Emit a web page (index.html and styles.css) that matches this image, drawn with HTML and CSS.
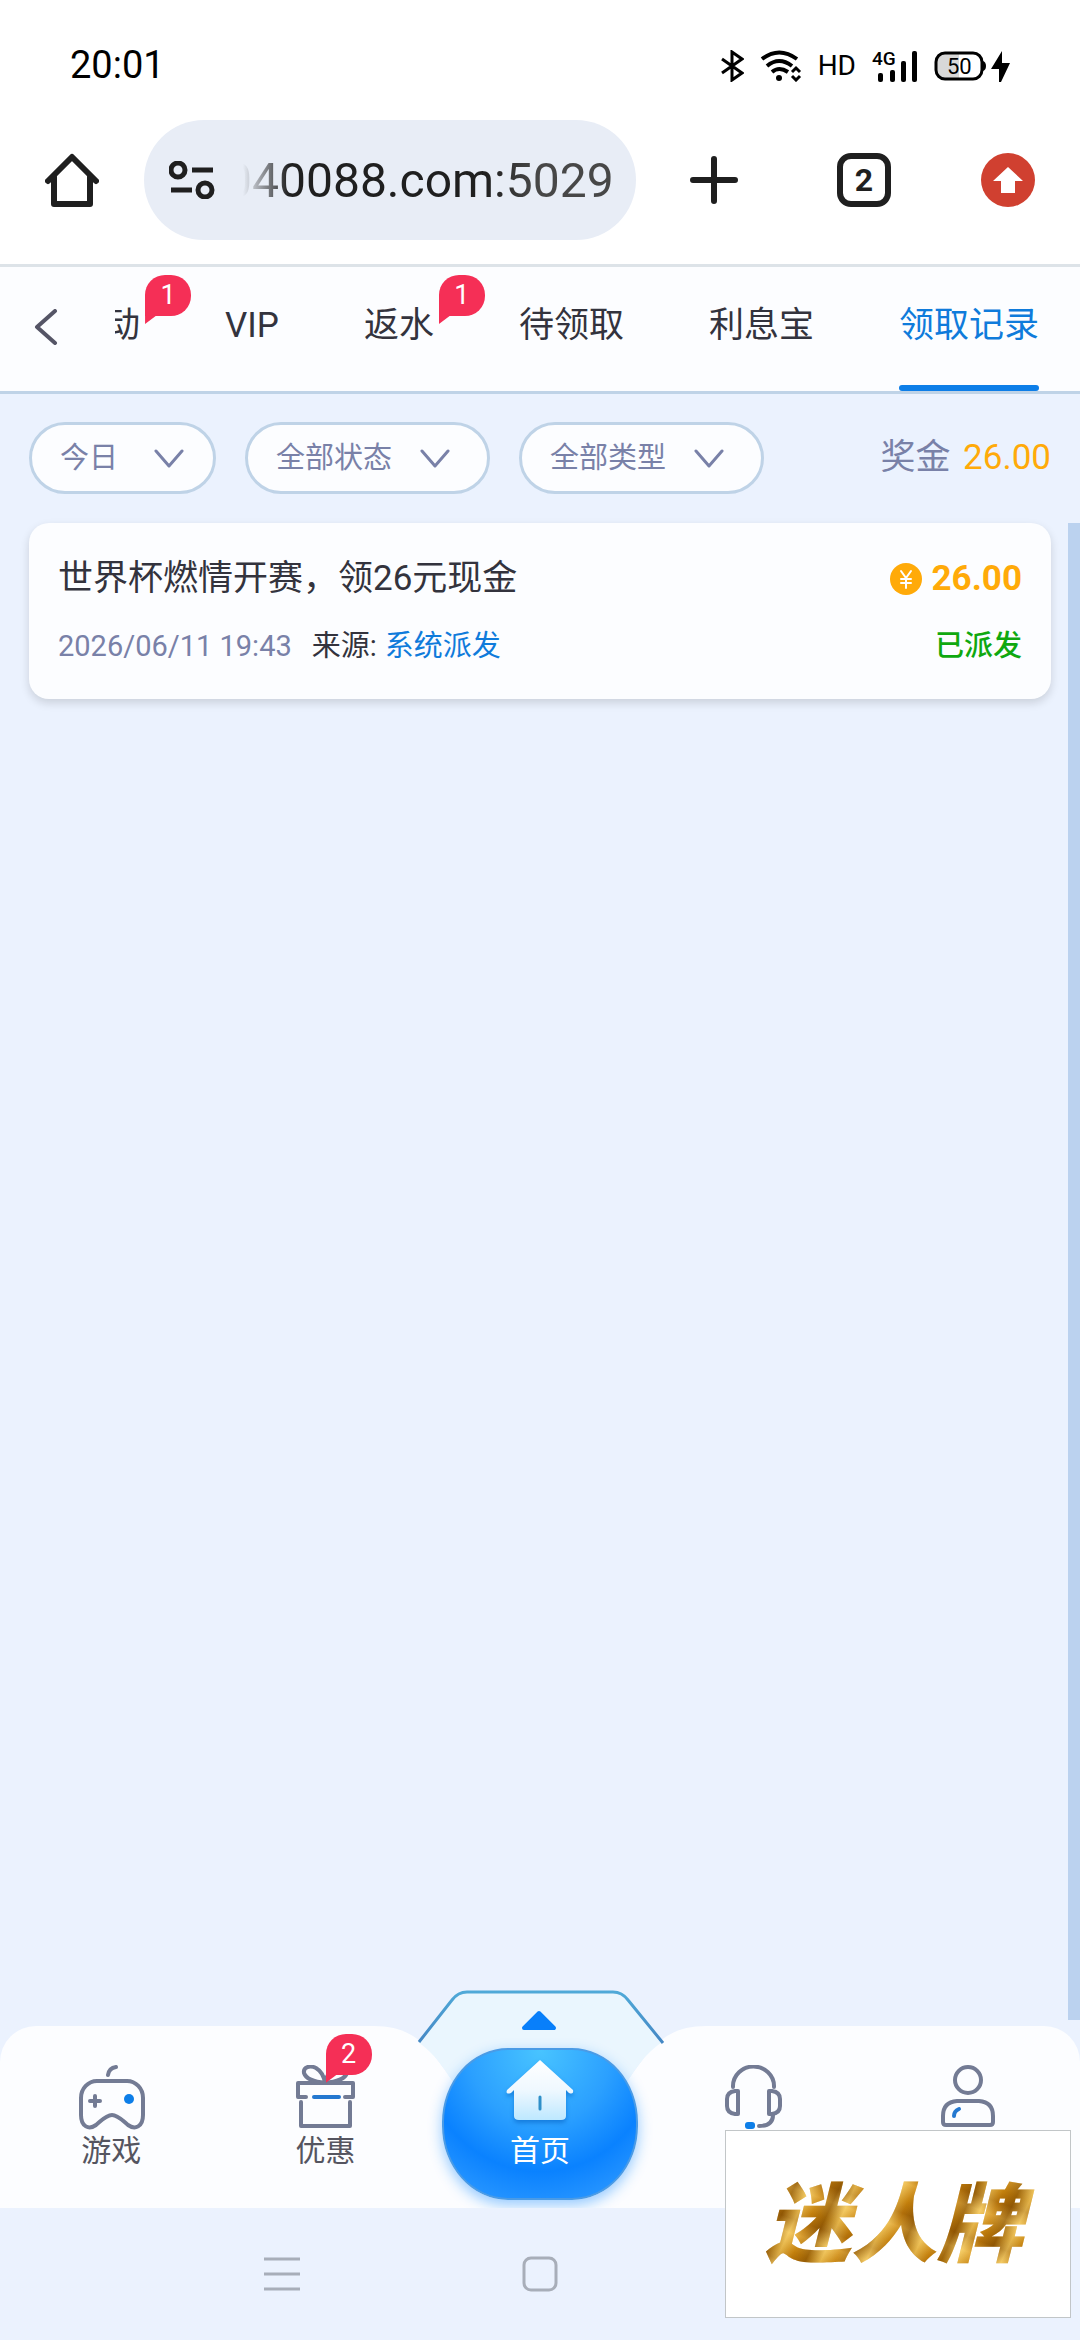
FILE: index.html
```html
<!DOCTYPE html>
<html lang="zh">
  <head>
    <meta charset="UTF-8" />
    <meta name="viewport" content="width=device-width, initial-scale=1.0" />
    <title>领取记录</title>
    <link rel="stylesheet" href="styles.css">
  </head>

  <body>
    <!-- 状态栏 -->
    <div class="status-bar">
      <span class="time">20:01</span>
      <div class="status-icons">
        <svg width="24" height="32" viewBox="0 0 24 32" fill="none" stroke="#000" stroke-width="3">
          <path d="M2 9 L22 23 L12 30 V2 L22 9 L2 23" />
        </svg>
        <svg class="wifi" width="42" height="32" viewBox="0 0 42 32" fill="none" stroke="#000" stroke-width="4">
          <path d="M2 9 Q19 -4 37 9" />
          <path d="M7 16 Q19 6 32 16" />
          <path d="M12 22 Q19 16 28 22" />
          <circle cx="19" cy="28" r="3" fill="#000" stroke="none" />
          <path d="M32 22 L36 18 L40 22 M32 26 L36 30 L40 26" stroke-width="3" />
        </svg>
        <span class="hd">HD</span>
        <svg class="signal" width="46" height="44" viewBox="0 -6 46 44">
          <text x="0" y="15" font-size="19" font-weight="500">4G</text>
          <rect x="6" y="23" width="5" height="9" rx="2" />
          <rect x="18" y="20" width="5" height="12" rx="2" />
          <rect x="29" y="11" width="5" height="21" rx="2" />
          <rect x="40" y="1" width="5" height="31" rx="2" />
        </svg>
        <svg class="battery" width="76" height="32" viewBox="0 0 76 32">
          <path d="M10 3 H25 V29 H10 Q3 29 3 20 V11 Q3 3 10 3Z" fill="#d8d8d8" />
          <rect x="2" y="3" width="46" height="26" rx="9" fill="none" stroke="#000" stroke-width="3" />
          <path d="M49 11 Q52 12 52 16 T49 21Z" />
          <text x="13" y="24" font-size="22">50</text>
          <path d="M68 1 L57 19 H65 V32 H67 L76 13 H68Z" />
        </svg>
      </div>
    </div>

    <!-- 浏览器地址栏 -->
    <header class="browser-bar">
      <button class="icon-btn" aria-label="主页">
        <svg width="54" height="54" viewBox="0 0 54 54" fill="none" stroke="#1f1f1f" stroke-width="6" stroke-linecap="round" stroke-linejoin="round">
          <path d="M3 28 L27 4 L51 28" />
          <path d="M9 24 V51 H45 V24" />
        </svg>
      </button>
      <div class="address">
        <svg width="46" height="38" viewBox="0 0 46 38" fill="none" stroke="#1f1f1f" stroke-width="5">
          <circle cx="9" cy="9" r="7" />
          <path d="M23 9 H44 M2 29 H23" />
          <circle cx="36" cy="29" r="7" />
        </svg>
        <input type="text" value="040088.com:5029" aria-label="网址" />
      </div>
      <button class="icon-btn add" aria-label="新标签页">
        <svg width="48" height="48" viewBox="0 0 48 48" stroke="#1f1f1f" stroke-width="6" stroke-linecap="round">
          <path d="M3 24 H45 M24 3 V45" />
        </svg>
      </button>
      <button class="icon-btn"><span class="tab-count">2</span></button>
      <button class="icon-btn" aria-label="更新">
        <svg width="54" height="54" viewBox="0 0 54 54">
          <circle cx="27" cy="27" r="27" fill="#d04030" />
          <path d="M27 14 L42 28 H34 V40 H20 V28 H12Z" fill="#fff" />
        </svg>
      </button>
    </header>

    <!-- 顶部导航 -->
    <div class="top-nav">
      <button class="back" aria-label="返回">
        <svg width="24" height="36" viewBox="0 0 24 36" fill="none" stroke="#555566" stroke-width="4" stroke-linecap="round" stroke-linejoin="round">
          <path d="M21 2 L3 18 L21 34" />
        </svg>
      </button>
      <nav class="tabs">
        <a href="#">动<span class="badge">1</span></a>
        <a href="#">VIP</a>
        <a href="#">返水<span class="badge">1</span></a>
        <a href="#">待领取</a>
        <a href="#">利息宝</a>
        <a href="#" class="active">领取记录</a>
      </nav>
    </div>

    <!-- 筛选 -->
    <div class="filters">
      <div class="filter filter-date">
        <select aria-label="日期"><option>今日</option></select>
        <svg width="30" height="20" viewBox="0 0 30 20"><path d="M2 2 L15 17 L28 2" /></svg>
      </div>
      <div class="filter">
        <select aria-label="状态"><option>全部状态</option></select>
        <svg width="30" height="20" viewBox="0 0 30 20"><path d="M2 2 L15 17 L28 2" /></svg>
      </div>
      <div class="filter">
        <select aria-label="类型"><option>全部类型</option></select>
        <svg width="30" height="20" viewBox="0 0 30 20"><path d="M2 2 L15 17 L28 2" /></svg>
      </div>
      <div class="bonus">奖金 <span>26.00</span></div>
    </div>

    <main>
      <div class="records">
        <article class="card">
          <div class="row title-row">
            <span>世界杯燃情开赛，领26元现金</span>
            <span class="amount">
              <svg width="32" height="32" viewBox="0 0 32 32">
                <circle cx="16" cy="16" r="16" fill="#ffaa09" />
                <path d="M11 8 L16 15 L21 8 M16 15 V25 M11 16 H21 M11 20 H21" fill="none" stroke="#fff" stroke-width="2" stroke-linecap="round" />
              </svg>
              26.00
            </span>
          </div>
          <div class="row info-row">
            <span class="date">2026/06/11 19:43</span>
            <span>来源:</span>
            <span class="source">系统派发</span>
            <span class="state">已派发</span>
          </div>
        </article>
      </div>
      <div class="scroll-thumb"></div>
    </main>

    <!-- 底部导航 -->
    <nav class="bottom-nav">
      <svg class="tray" width="360" height="228" viewBox="0 0 360 228">
        <defs>
          <linearGradient id="trayLine" x1="0" y1="0" x2="0" y2="1">
            <stop offset="0" stop-color="#4fa9d8" />
            <stop offset="1" stop-color="#4587c4" />
          </linearGradient>
        </defs>
        <path d="M14 46 C58 46 72 72 96 106 H264 C288 72 302 46 346 46Z" fill="#ebf2fe" />
        <path d="M58 62 L92 19 Q98 11 107 11 H253 Q262 11 268 19 L302 62 C284 75 278 86 264 106 H96 C82 86 76 75 58 62Z" fill="#eaf6fe" />
        <path d="M59 62 L92 20 Q98 12 107 12 H253 Q262 12 268 20 L303 63" fill="none" stroke="url(#trayLine)" stroke-width="3" />
        <path d="M179 33 L194 48 H164Z" fill="#087ffa" stroke="#087ffa" stroke-width="4" stroke-linejoin="round" />
      </svg>
      <a href="#" class="nav-item">
        <svg width="68" height="66" viewBox="0 0 68 66">
          <path d="M20 16 H50 A16 17 0 0 1 66 33 V50 C66 62 58 65 51 60 C46 56 41 50 35 50 S24 56 19 60 C12 65 4 62 4 50 V33 A16 17 0 0 1 20 16Z" />
          <path d="M31 10 Q32 3 39 2" />
          <path d="M13 36 H23 M18 31 V41" />
          <circle cx="52" cy="34" r="5" class="dot" />
        </svg>
        游戏
      </a>
      <a href="#" class="nav-item">
        <svg width="68" height="66" viewBox="0 0 68 66">
          <path d="M14 32 H6 V18 H61 V32 H53" />
          <path d="M9 37 V61 H58 V37" />
          <path d="M33 18 C24 17 14 14 12 8 C11 2 18 0 24 3 C29 6 32 11 33 18 C34 11 38 6 43 3 C49 0 56 2 55 8 C53 14 43 17 33 18" />
          <path d="M22 32 H47" class="accent" />
        </svg>
        优惠
        <span class="badge">2</span>
      </a>
      <a href="#" class="home-btn">
        <svg width="70" height="70" viewBox="0 0 70 70">
          <defs>
            <linearGradient id="house" x1="0" y1="0" x2="0" y2="1">
              <stop offset="0" stop-color="#fff" />
              <stop offset="0.5" stop-color="#eff8ff" />
              <stop offset="1" stop-color="#bde8ff" />
            </linearGradient>
          </defs>
          <path d="M35 3 L68 33 Q69 38 64 36 L61 33 V59 Q61 63 56 63 H14 Q9 63 9 59 V33 L6 36 Q0 38 2 33Z" fill="url(#house)" />
          <path d="M35 40 V52" stroke="#2e8fc9" stroke-width="3" stroke-linecap="round" />
        </svg>
        首页
      </a>
      <a href="#" class="nav-item" aria-label="客服">
        <svg width="68" height="66" viewBox="0 0 68 66">
          <path d="M13 22 V21 A20 19 0 0 1 54 21 V22" />
          <path d="M18 26 V49 H15 Q7 48 7 41 V34 Q7 27 15 26Z" />
          <path d="M49 26 V49 H52 Q60 48 60 41 V34 Q60 27 52 26Z" />
          <path d="M53 50 Q53 61 39 61" />
          <rect x="25" y="57" width="10" height="7" rx="3" class="dot" />
        </svg>
      </a>
      <a href="#" class="nav-item" aria-label="我的">
        <svg width="68" height="66" viewBox="0 0 68 66">
          <circle cx="33" cy="15" r="13" />
          <path d="M22 36 H44 Q58 37 58 51 V57 Q58 60 55 60 H11 Q8 60 8 57 V51 Q8 37 22 36Z" />
          <path d="M19 51 Q19 46 24 44" class="accent" />
        </svg>
      </a>
    </nav>

    <!-- 系统按键 -->
    <footer class="system-nav">
      <button aria-label="最近任务">
        <svg width="36" height="36" viewBox="0 0 36 36"><path d="M0 3 H36 M0 18 H36 M0 33 H36" /></svg>
      </button>
      <button aria-label="桌面">
        <svg width="36" height="36" viewBox="0 0 36 36"><rect x="2" y="2" width="32" height="32" rx="7" /></svg>
      </button>
    </footer>

    <div class="watermark"><span>迷人牌</span></div>
  </body>
</html>
```
FILE: styles.css
```css
* {
  box-sizing: border-box;
}

body {
  margin: 0;
  min-height: 100vh;
  position: relative;
  display: flex;
  flex-direction: column;
  font-family: Roboto, "Noto Sans CJK SC", sans-serif;
  font-size: 35px;
  line-height: 1.2;
  background-color: #ebf2fe;
  color: #33333d;
}

a {
  color: inherit;
  text-decoration: none;
}

button {
  padding: 0;
  border: none;
  background: none;
  font-family: inherit;
  cursor: pointer;
}

svg {
  display: block;
  flex-shrink: 0;
}

/* 状态栏 */
.status-bar {
  height: 108px;
  padding: 24px 70px 0;
  display: flex;
  align-items: center;
  justify-content: space-between;
  background-color: #fff;
  color: #000;
}

.time {
  font-size: 38px;
}

.status-icons {
  display: flex;
  align-items: center;
  gap: 16px;
}

.hd {
  font-size: 28px;
}

/* 浏览器地址栏 */
.browser-bar {
  display: flex;
  align-items: center;
  padding: 12px 0 24px;
  background-color: #fff;
  border-bottom: 3px solid #dde3e8;
}

.icon-btn {
  width: 144px;
  height: 120px;
  display: flex;
  align-items: center;
  justify-content: center;
}

.icon-btn.add {
  width: 156px;
}

.address {
  flex: 1;
  min-width: 0;
  height: 120px;
  padding: 0 12px 0 25px;
  display: flex;
  align-items: center;
  gap: 10px;
  border-radius: 60px;
  background-color: #e8edf6;
}

.address input {
  flex: 1;
  min-width: 0;
  padding: 0;
  border: none;
  outline: none;
  font-family: inherit;
  font-size: 48px;
  color: transparent;
  background: linear-gradient(to right, transparent 18px, #1f1f1f 64px, #1f1f1f 260px, #474747 310px);
  -webkit-background-clip: text;
  background-clip: text;
}

.tab-count {
  width: 54px;
  height: 54px;
  border: 6px solid #1f1f1f;
  border-radius: 14px;
  font-size: 32px;
  font-weight: bold;
  line-height: 42px;
  color: #1f1f1f;
}

/* 顶部导航 */
.top-nav {
  display: flex;
  height: 127px;
  background-color: #fcfdff;
  border-bottom: 3px solid #bfd3e7;
}

.back {
  width: 115px;
  padding: 0 0 4px 34px;
}

.tabs {
  flex: 1;
  min-width: 0;
  display: flex;
  justify-content: flex-end;
  gap: 85px;
  padding-right: 41px;
  overflow: hidden;
}

.tabs a {
  position: relative;
  flex-shrink: 0;
  line-height: 118px;
  border-bottom: 6px solid transparent;
}

.tabs a.active {
  color: #0f7bdb;
}

.tabs a.active::after {
  content: "";
  position: absolute;
  left: 0;
  right: 0;
  bottom: -6px;
  height: 6px;
  border-radius: 3px;
  background-color: #0d7ee8;
}

.badge {
  position: absolute;
  top: 8px;
  width: 46px;
  height: 41px;
  border-radius: 20px 20px 20px 0;
  background-color: #f52f56;
  color: #fff;
  font-size: 27px;
  line-height: 40px;
  text-align: center;
}

.badge::after {
  content: "";
  position: absolute;
  left: 0;
  top: 40px;
  width: 12px;
  height: 9px;
  background-color: #f52f56;
  clip-path: polygon(0 0, 100% 0, 0 100%);
}

.tabs .badge {
  left: 100%;
  margin-left: 5px;
}

/* 筛选 */
.filters {
  display: flex;
  align-items: center;
  gap: 29px;
  padding: 28px 29px 29px;
}

.filter {
  position: relative;
}

.filter select {
  display: block;
  height: 72px;
  padding: 0 94px 0 28px;
  appearance: none;
  border: 3px solid #bfd3e7;
  border-radius: 36px;
  background-color: #fcfdff;
  color: #7981a8;
  font-family: inherit;
  font-size: 29px;
}

.filter svg {
  position: absolute;
  right: 40px;
  top: 27px;
  fill: none;
  stroke: #7981a8;
  stroke-width: 3;
  stroke-linecap: round;
  stroke-linejoin: round;
  pointer-events: none;
}

.filter-date svg {
  right: 32px;
}

.bonus {
  margin-left: auto;
  color: #7981a8;
}

.bonus span {
  margin-left: 4px;
  color: #ffaa09;
}

/* 记录列表 */
main {
  flex: 1;
  display: flex;
  padding-bottom: 6px;
}

.records {
  flex: 1;
  padding: 0 17px 0 29px;
}

.scroll-thumb {
  width: 12px;
  background-color: #bbd2ef;
}

.card {
  padding: 29px 29px 33px;
  border-radius: 20px;
  background-color: #fcfdff;
  box-shadow: 0 4px 10px rgba(0, 0, 0, 0.14);
}

.row {
  display: flex;
  align-items: center;
}

.title-row {
  justify-content: space-between;
  height: 54px;
}

.amount {
  display: flex;
  align-items: center;
  gap: 10px;
  color: #ffaa09;
  font-weight: bold;
}

.info-row {
  height: 40px;
  margin-top: 20px;
  font-size: 29px;
}

.date {
  margin-right: 20px;
  color: #7981a8;
}

.source {
  margin-left: 8px;
  color: #0f7bdb;
}

.state {
  margin-left: auto;
  color: #0fa80f;
  font-weight: 500;
}

/* 底部导航 */
.bottom-nav {
  position: relative;
  height: 182px;
  padding: 0 4px;
  display: grid;
  grid-template-columns: repeat(5, 1fr);
  border-radius: 36px 36px 0 0;
  background-color: #fcfdff;
  font-size: 30px;
  line-height: 36px;
}

.tray {
  position: absolute;
  left: 50%;
  bottom: 0;
  margin-left: -180px;
}

.nav-item {
  position: relative;
  display: flex;
  flex-direction: column;
  align-items: center;
  gap: 2px;
  padding-top: 39px;
  color: #555560;
}

.nav-item svg {
  fill: none;
  stroke: #737b94;
  stroke-width: 4;
  stroke-linecap: round;
  stroke-linejoin: round;
}

.nav-item .dot {
  fill: #0d7ee8;
  stroke: none;
}

.nav-item .accent {
  stroke: #2478d0;
}

.nav-item .badge {
  left: 50%;
}

.home-btn {
  position: relative;
  width: 196px;
  height: 152px;
  margin-top: 22px;
  padding-top: 7px;
  justify-self: center;
  display: flex;
  flex-direction: column;
  align-items: center;
  gap: 6px;
  border: 2px solid #4a9be6;
  border-radius: 66px / 74px;
  background: radial-gradient(ellipse 130px 135px at 50% 0, #48c4ff, #2ba0ff 55%, #0a82ff 90%, #2a97ff 120%);
  box-shadow: 0 5px 14px rgba(20, 140, 255, 0.45);
  color: #fff;
}

.home-btn svg {
  filter: drop-shadow(0 3px 2px rgba(0, 90, 190, 0.5));
}

/* 系统按键 */
.system-nav {
  position: relative;
  height: 132px;
  display: grid;
  grid-template-columns: repeat(3, 258px);
  justify-content: center;
  background-color: #ebf2fe;
}

.system-nav button {
  display: flex;
  align-items: center;
  justify-content: center;
}

.system-nav svg {
  fill: none;
  stroke: #a8aeb9;
  stroke-width: 3;
}

/* 水印 */
.watermark {
  position: absolute;
  right: 9px;
  bottom: 22px;
  width: 346px;
  height: 188px;
  display: flex;
  align-items: center;
  justify-content: center;
  border: 1px solid #c2c6c8;
  background-color: #fff;
}

.watermark span {
  padding: 4px 12px 0 4px;
  font-size: 86px;
  font-weight: 900;
  font-style: italic;
  line-height: 120px;
  color: transparent;
  background:
    repeating-linear-gradient(115deg, rgba(122, 70, 0, 0.55) 0, rgba(255, 225, 130, 0.5) 14px, rgba(190, 120, 10, 0.4) 27px, rgba(122, 70, 0, 0.55) 41px),
    repeating-linear-gradient(20deg, #c8860f 0, #eebb4e 17px, #a8690a 31px, #c8860f 43px);
  -webkit-background-clip: text;
  background-clip: text;
}
```
